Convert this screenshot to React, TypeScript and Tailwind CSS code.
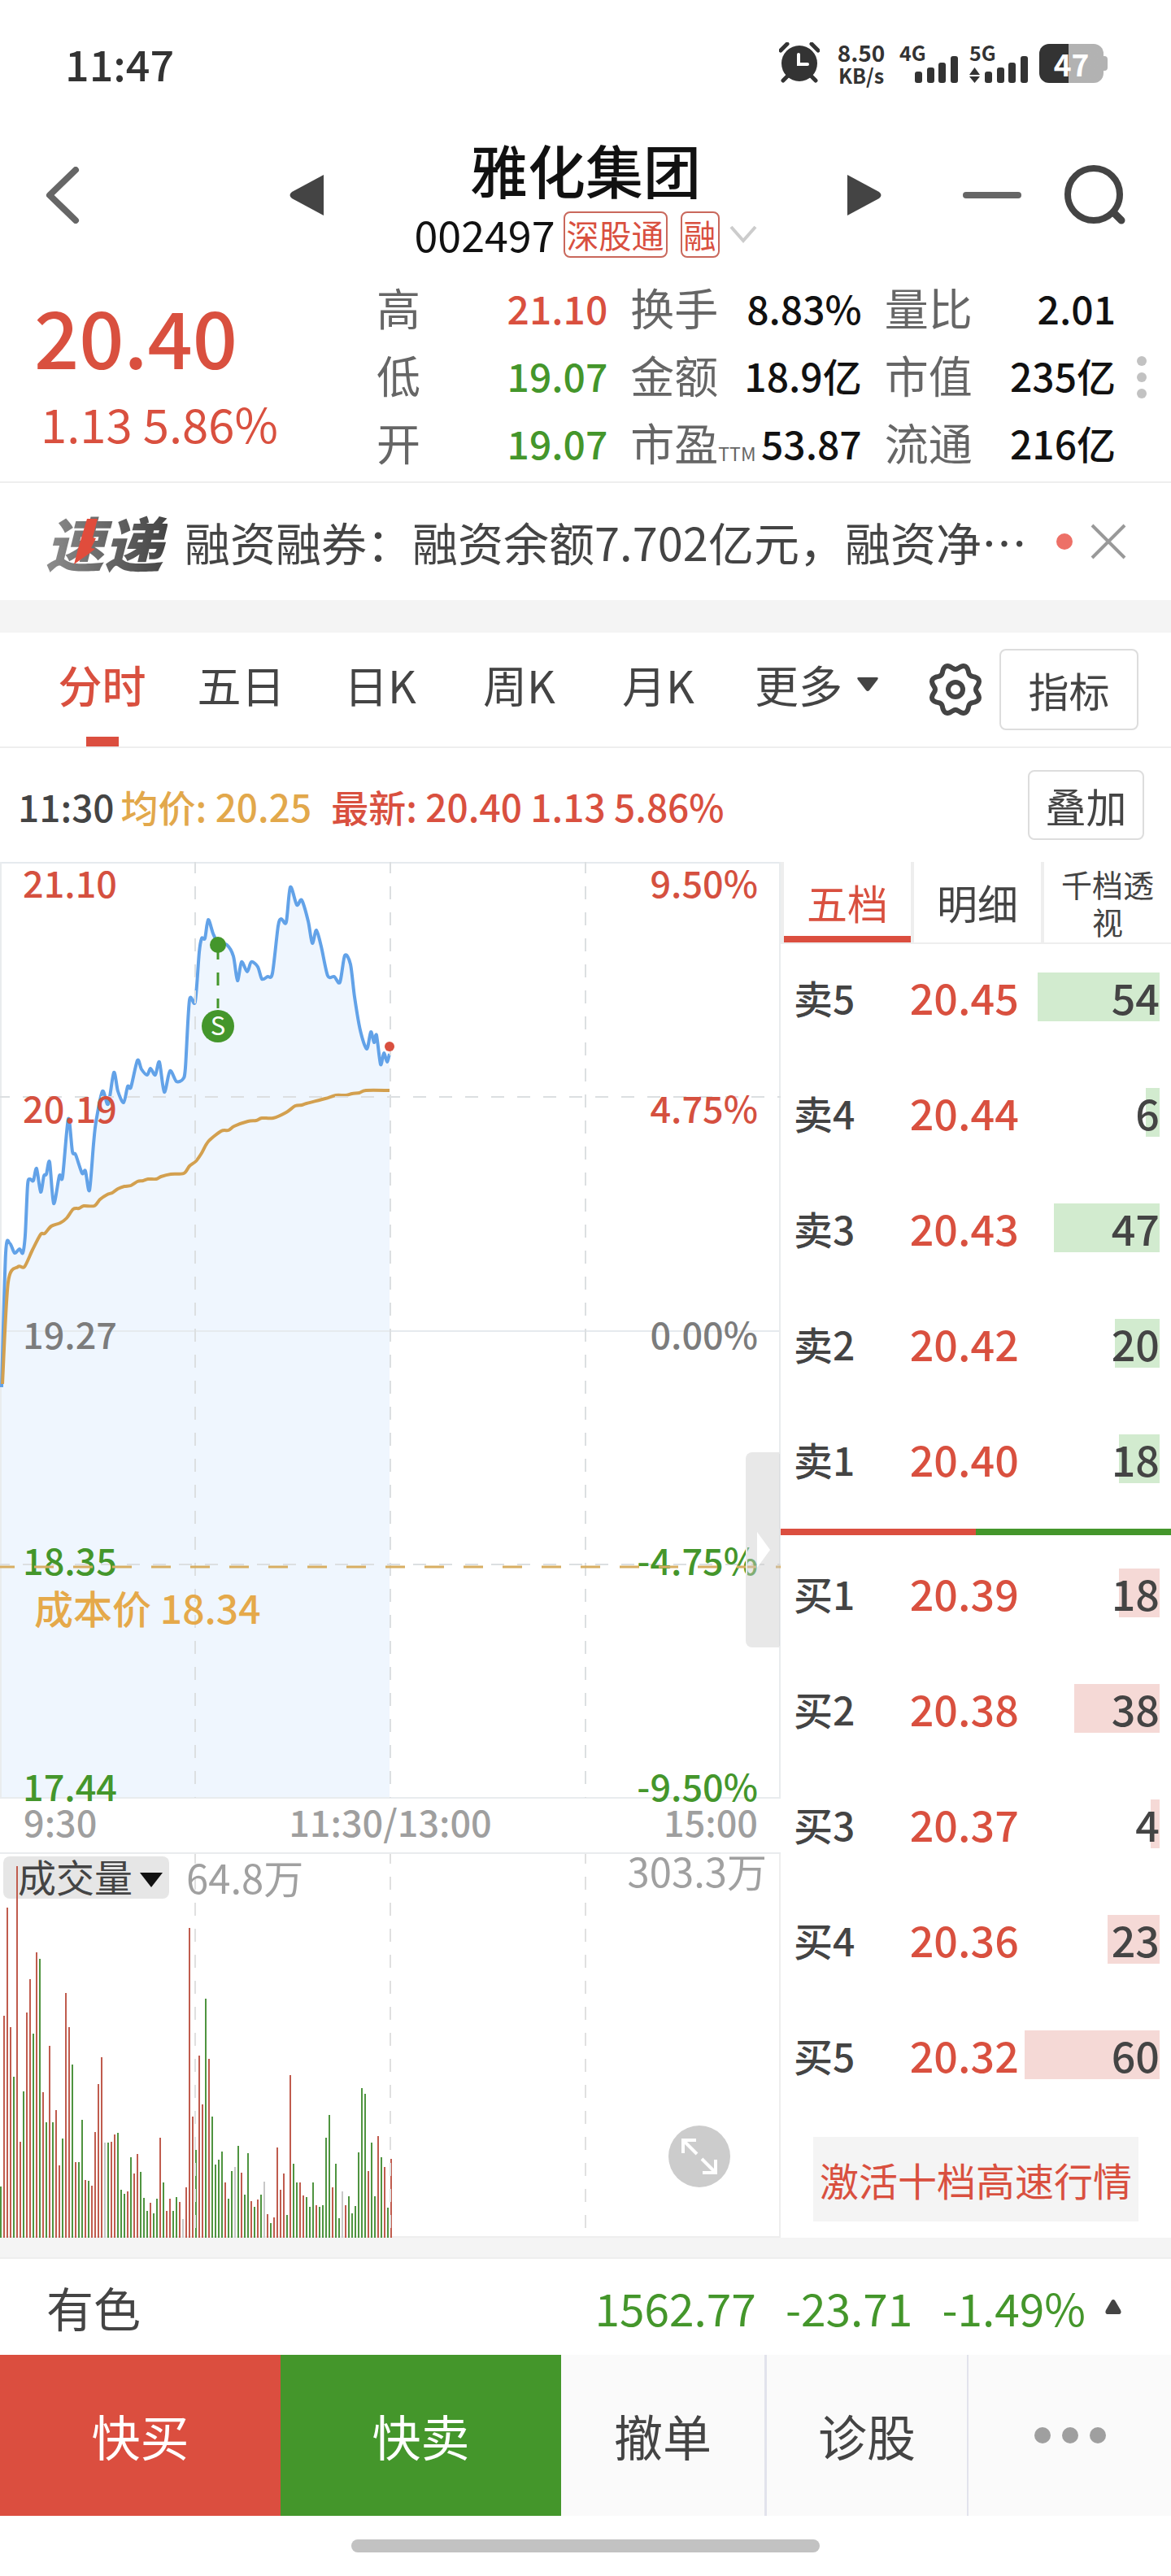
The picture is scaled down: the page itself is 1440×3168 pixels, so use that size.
import { useState } from "react";

type Tone = "r" | "g" | "n";
type Point = [number, number];

const STATS = [
  { label: "高", value: "21.10", color: "text-[#d9503f]" },
  { label: "换手", value: "8.83%", color: "text-[#111111]" },
  { label: "量比", value: "2.01", color: "text-[#111111]" },
  { label: "低", value: "19.07", color: "text-[#44962b]" },
  { label: "金额", value: "18.9亿", color: "text-[#111111]" },
  { label: "市值", value: "235亿", color: "text-[#111111]" },
  { label: "开", value: "19.07", color: "text-[#44962b]" },
  { label: "市盈", sub: "TTM", value: "53.87", color: "text-[#111111]" },
  { label: "流通", value: "216亿", color: "text-[#111111]" },
];

const PERIODS = ["分时", "五日", "日K", "周K", "月K"];

const SELLS = [
  { label: "卖5", price: "20.45", qty: 54 },
  { label: "卖4", price: "20.44", qty: 6 },
  { label: "卖3", price: "20.43", qty: 47 },
  { label: "卖2", price: "20.42", qty: 20 },
  { label: "卖1", price: "20.40", qty: 18 },
];

const BUYS = [
  { label: "买1", price: "20.39", qty: 18 },
  { label: "买2", price: "20.38", qty: 38 },
  { label: "买3", price: "20.37", qty: 4 },
  { label: "买4", price: "20.36", qty: 23 },
  { label: "买5", price: "20.32", qty: 60 },
];

const PRICE: Point[] = [
  [2, 646], [7, 481], [12, 469], [18, 481], [24, 476], [28, 481], [31, 459], [34, 397], [37, 390], [41, 392],
  [45, 377], [50, 406], [54, 386], [57, 384], [61, 369], [66, 420], [73, 386], [77, 387], [84, 316], [89, 356],
  [93, 360], [101, 383], [105, 380], [110, 404], [115, 347], [118, 320], [126, 282], [133, 298], [140, 259],
  [145, 282], [152, 296], [157, 276], [161, 277], [169, 244], [174, 255], [181, 262], [185, 254], [191, 262],
  [196, 246], [202, 283], [209, 257], [217, 270], [225, 267], [228, 253], [233, 170], [240, 172], [245, 111],
  [248, 94], [252, 94], [256, 71], [262, 88], [268, 99], [279, 102], [287, 116], [292, 146], [297, 123],
  [304, 135], [309, 123], [317, 129], [322, 144], [329, 141], [335, 137], [342, 79], [346, 70], [352, 74],
  [357, 31], [365, 53], [371, 47], [379, 73], [384, 100], [389, 84], [395, 104], [403, 140], [411, 141],
  [418, 148], [424, 115], [431, 126], [436, 166], [443, 207], [451, 230], [456, 209], [460, 222], [463, 213],
  [468, 249], [472, 235], [476, 246], [479, 236],
];

const AVERAGE: Point[] = [
  [3, 642], [10, 517], [22, 498], [30, 498], [40, 477], [50, 458], [55, 457], [63, 448], [74, 444], [82, 438],
  [90, 427], [97, 426], [103, 423], [116, 423], [123, 415], [132, 409], [138, 407], [145, 402], [153, 399],
  [161, 398], [169, 393], [176, 392], [182, 390], [192, 390], [198, 387], [210, 384], [226, 383], [233, 374],
  [241, 368], [248, 358], [256, 344], [272, 331], [281, 330], [288, 325], [305, 319], [315, 318], [322, 315],
  [336, 315], [352, 308], [363, 300], [371, 299], [377, 297], [400, 291], [413, 287], [425, 287], [433, 285],
  [442, 284], [450, 281], [479, 281],
];

// one bar per minute, 9:30 to 11:30
const VOLUME = [
  63, 273, 406, 259, 198, 457, 118, 180, 277, 318, 251, 351, 343, 179, 142, 236, 142, 157, 89, 122, 301, 259, 213, 93,
  93, 145, 71, 70, 64, 130, 189, 222, 117, 117, 118, 127, 129, 59, 54, 57, 99, 79, 103, 81, 49, 33, 43, 30, 48, 123,
  68, 33, 48, 33, 50, 44, 23, 62, 381, 149, 108, 224, 164, 294, 220, 149, 90, 96, 106, 68, 48, 82, 87, 113, 80, 53,
  104, 45, 38, 47, 53, 69, 29, 18, 25, 111, 59, 79, 28, 200, 91, 68, 68, 52, 50, 38, 68, 40, 38, 40, 123, 151, 62, 91,
  24, 57, 40, 51, 30, 39, 105, 184, 177, 82, 117, 51, 125, 99, 87, 37, 97,
];
const VOLUME_TONES =
  "grrrgrrgrrgrgrgrgrrgrrgrggrgrrrrngrrgggrgrrgggrggrgrrggrnrrrgrrgrggggrggngrggrgrgnrgrrrrgrggrrgggrggggrggnrggggggrggrgrgr".split(
    "",
  ) as Tone[];

const TONE_FILL: Record<Tone, string> = { r: "#c05c4e", g: "#4f9440", n: "#c8c8c8" };

function smooth(points: Point[]) {
  let d = `M${points[0][0]} ${points[0][1]}`;
  for (let i = 1; i < points.length; i++) {
    const p0 = points[Math.max(0, i - 2)];
    const p1 = points[i - 1];
    const p2 = points[i];
    const p3 = points[Math.min(points.length - 1, i + 1)];
    const c1 = [p1[0] + (p2[0] - p0[0]) / 7, p1[1] + (p2[1] - p0[1]) / 7];
    const c2 = [p2[0] - (p3[0] - p1[0]) / 7, p2[1] - (p3[1] - p1[1]) / 7];
    d += `C${c1[0]} ${c1[1]} ${c2[0]} ${c2[1]} ${p2[0]} ${p2[1]}`;
  }
  return d;
}

// eight-lobed outline of the settings icon
const GEAR = Array.from({ length: 96 }, (_, i) => {
  const a = (i / 96) * Math.PI * 2;
  const r = 28 - 3 * Math.cos(8 * a);
  return `${(34 + r * Math.cos(a)).toFixed(1)},${(34 + r * Math.sin(a)).toFixed(1)}`;
}).join(" ");

function Signal({ label, arrows }: { label: string; arrows?: boolean }) {
  return (
    <div className="flex h-[52px] w-[74px] flex-col">
      <span className="text-[25px] leading-6 font-bold">{label}</span>
      <svg viewBox="0 0 74 34" className="-mt-2 h-[34px] w-[74px]" fill="#333333">
        {arrows && <path d="M0 24 6.500 15 13 24ZM0 26h13L6.500 34Z" />}
        <rect x="19" y="20" width="9" height="14" rx="3" />
        <rect x="34" y="15" width="9" height="19" rx="3" />
        <rect x="48" y="9" width="9" height="25" rx="3" />
        <rect x="63" y="1" width="9" height="33" rx="3" />
      </svg>
    </div>
  );
}

function StatusBar() {
  return (
    <div className="flex h-[160px] items-center justify-between pr-[78px] pb-1 pl-[80px] text-[#333333]">
      <time className="text-[52px] leading-none font-medium">11:47</time>
      <div className="flex items-center">
        <svg viewBox="0 0 50 52" className="h-[52px] w-[50px]">
          <path d="M2 10 10 2M48 10 40 2M5 47l6-6M45 47l-6-6" stroke="#333333" strokeWidth="5" strokeLinecap="round" />
          <circle cx="25" cy="26" r="22" fill="#333333" />
          <path d="M24 15v12h11" fill="none" stroke="#fff" strokeWidth="4" strokeLinecap="round" />
        </svg>
        <div className="ml-4 flex w-[70px] flex-col items-center font-bold">
          <span className="text-[28px] leading-7">8.50</span>
          <span className="text-[25px] leading-7">KB/s</span>
        </div>
        <div className="ml-3">
          <Signal label="4G" />
        </div>
        <div className="ml-3">
          <Signal label="5G" arrows />
        </div>
        <div className="ml-3 flex items-center">
          <div className="flex h-12 w-[79px] items-center justify-center rounded-xl bg-linear-to-r from-[#333333] from-46% to-[#b2b2b2] to-46%">
            <span className="text-[37px] leading-none font-bold text-white">47</span>
          </div>
          <div className="h-[18px] w-[5px] rounded-r bg-[#b2b2b2]" />
        </div>
      </div>
    </div>
  );
}

function Header() {
  return (
    <header className="flex h-[176px] items-center justify-between pr-14 pb-4 pl-14">
      <div className="flex items-center gap-[258px]">
        <button aria-label="返回">
          <svg viewBox="0 0 42 70" className="h-[70px] w-[42px]" fill="none" stroke="#666666" strokeWidth="8" strokeLinecap="round" strokeLinejoin="round">
            <path d="M37 4 5 35l32 31" />
          </svg>
        </button>
        <button aria-label="上一只">
          <svg viewBox="0 0 42 50" className="h-[50px] w-[42px]" fill="#444444">
            <path d="M42 0v50L3 29q-5-4 0-8Z" />
          </svg>
        </button>
      </div>
      <div className="flex flex-col items-center gap-2">
        <h1 className="text-[71px] leading-[88px] font-medium text-[#111111]">雅化集团</h1>
        <div className="flex items-center">
          <span className="text-[52px] leading-[58px] text-[#111111]">002497</span>
          <span className="ml-2.5 h-[57px] rounded-lg border-2 border-[#c9685c] px-0.5 text-[40px] leading-[52px] text-[#d9503f]">深股通</span>
          <span className="ml-4 h-[57px] rounded-lg border-2 border-[#c9685c] px-0.5 text-[40px] leading-[52px] text-[#d9503f]">融</span>
          <button aria-label="展开" className="ml-3">
            <svg viewBox="0 0 34 22" className="h-[22px] w-[34px]" fill="none" stroke="#cccccc" strokeWidth="4">
              <path d="m2 2 15 17L32 2" />
            </svg>
          </button>
        </div>
      </div>
      <div className="flex items-center">
        <button aria-label="下一只">
          <svg viewBox="0 0 42 50" className="h-[50px] w-[42px]" fill="#444444">
            <path d="M0 0v50l39-21q5-4 0-8Z" />
          </svg>
        </button>
        <button aria-label="删除自选" className="ml-[100px] h-2 w-[72px] rounded-full bg-[#666666]" />
        <button aria-label="搜索" className="ml-[52px]">
          <svg viewBox="0 0 76 76" className="h-[76px] w-[76px]" fill="none" stroke="#444444" strokeWidth="8" strokeLinecap="round">
            <circle cx="37" cy="37" r="32" />
            <path d="m62 60 9 9" strokeWidth="9" />
          </svg>
        </button>
      </div>
    </header>
  );
}

function Quote() {
  return (
    <section className="flex h-[258px] items-start border-b-2 border-[#eeeeee]">
      <div className="w-[463px] pl-[42px] text-[#d9503f]">
        <p className="pt-5 text-[97px] leading-[112px] font-medium">20.40</p>
        <p className="mt-5 pl-2 text-[58px] leading-[64px]">1.13 5.86%</p>
      </div>
      <dl className="grid flex-1 grid-cols-3 gap-x-7">
        {STATS.map((s) => (
          <div key={s.label} className="flex h-[83px] items-center justify-between whitespace-nowrap">
            <dt className="text-[54px] leading-[80px] text-[#666666]">
              {s.label}
              {s.sub && <span className="text-[23px] leading-none">{s.sub}</span>}
            </dt>
            <dd className={`text-[48px] leading-[80px] font-medium ${s.color}`}>{s.value}</dd>
          </div>
        ))}
      </dl>
      <button aria-label="更多指标" className="flex w-[68px] flex-col items-center gap-2 self-center pr-1">
        <i className="size-3 rounded-full bg-[#c2c2c2]" />
        <i className="size-3 rounded-full bg-[#c2c2c2]" />
        <i className="size-3 rounded-full bg-[#c2c2c2]" />
      </button>
    </section>
  );
}

function News() {
  return (
    <section className="flex h-36 items-center pr-[55px] pl-14">
      <div className="relative w-[150px] shrink-0">
        <span className="block bg-linear-to-r from-[#8d8d8d] to-[#444444] bg-clip-text text-[72px] leading-[80px] font-black text-transparent italic">速递</span>
        <svg viewBox="0 0 32 56" className="absolute top-3 left-[34px] h-14 w-8" fill="#e04c3c">
          <path d="M17 0h13l-6 23 4 1-6 12 5 1-9 7L1 56l5-19Z" />
        </svg>
      </div>
      <a href="#news" className="ml-[21px] flex-1 truncate text-[56px] leading-[80px] text-[#444444]">
        融资融券：融资余额7.702亿元，融资净⋯
      </a>
      <i className="size-5 shrink-0 rounded-full bg-[#ed7067]" />
      <button aria-label="关闭" className="ml-[22px] shrink-0">
        <svg viewBox="0 0 44 44" className="size-11" stroke="#999999" strokeWidth="4">
          <path d="M2 2l40 40M42 2 2 42" />
        </svg>
      </button>
    </section>
  );
}

function PeriodTabs() {
  const [active, setActive] = useState("分时");
  return (
    <nav className="flex h-[142px] items-center border-b-2 border-[#eeeeee] pr-10 pl-10 text-[54px] text-[#444444]">
      {PERIODS.map((p) => (
        <button
          key={p}
          onClick={() => setActive(p)}
          className={`flex h-full w-[171px] flex-col items-center justify-between pt-6 leading-[80px] ${
            p === active ? "font-medium text-[#d9503f]" : ""
          }`}
        >
          {p}
          {p === active && <i className="h-3 w-10 bg-[#db4e3f]" />}
        </button>
      ))}
      <button className="ml-[33px] flex h-full items-start gap-[18px] pt-6 leading-[80px]">
        更多
        <svg viewBox="0 0 26 18" className="mt-[31px] h-[18px] w-[26px]" fill="#444444">
          <path d="M2 0h22q3 0 1 3L15 16q-2 2-4 0L1 3q-2-3 1-3Z" />
        </svg>
      </button>
      <button aria-label="设置" className="ml-auto">
        <svg viewBox="0 0 68 68" className="size-[68px]" fill="none" stroke="#444444" strokeWidth="6" strokeLinejoin="round">
          <polygon points={GEAR} />
          <circle cx="34" cy="34" r="9" />
        </svg>
      </button>
      <button className="ml-5 h-[100px] w-[171px] rounded-lg border-2 border-[#dddddd] text-[50px]">指标</button>
    </nav>
  );
}

function ChartInfo() {
  return (
    <div className="flex h-[140px] items-center justify-between pr-[33px] pl-[22px]">
      <p className="flex pt-0.5 text-[46px] font-medium text-[#d9503f]">
        <span className="text-[#444444]">11:30</span>
        <span className="ml-2 text-[#e2a84b]">均价: 20.25</span>
        <span className="ml-6">最新: 20.40 1.13 5.86%</span>
      </p>
      <button className="h-[86px] w-[143px] rounded-lg border-2 border-[#dddddd] text-[50px] leading-none text-[#444444]">叠加</button>
    </div>
  );
}

const AXIS = [
  { y: 44, price: "21.10", pct: "9.50%", fill: "#d5503f" },
  { y: 321, price: "20.19", pct: "4.75%", fill: "#d5503f" },
  { y: 599, price: "19.27", pct: "0.00%", fill: "#7c7c7c" },
  { y: 877, price: "18.35", pct: "-4.75%", fill: "#44962b" },
  { y: 1155, price: "17.44", pct: "-9.50%", fill: "#44962b" },
];

function PriceChart() {
  const line = smooth(PRICE);
  return (
    <div className="relative">
      <svg viewBox="0 0 960 1220" className="block w-full" fontSize="45" fontWeight="500">
        <path d={`${line}V1151H0V646Z`} fill="#eff6fe" />
        <path d="M0 1h960M0 577h960" stroke="#e6eaee" strokeWidth="2" />
        <path d="M1 0v1151M0 1151h960M959 0v1151M0 1219h960" stroke="#e9ecee" strokeWidth="2" fill="none" />
        <path d={line} fill="none" stroke="#62a2e8" strokeWidth="4" strokeLinejoin="round" />
        <path d={smooth(AVERAGE)} fill="none" stroke="#d3a04f" strokeWidth="4" />
        <path d="M-4 289H960M-4 864H960M240-2V1151M480-2V1151M720-2V1151" stroke="#dcdfe1" strokeWidth="2" strokeDasharray="16 16" />
        {AXIS.map((a) => (
          <g key={a.price} fill={a.fill}>
            <text x="28" y={a.y}>{a.price}</text>
            <text x="932" y={a.y} textAnchor="end">{a.pct}</text>
          </g>
        ))}
        <path d="M-6 867H960" stroke="#d8ae62" strokeWidth="3" strokeDasharray="24 24" />
        <text x="42" y="937" fontSize="48" fill="#e5a94a">成本价 18.34</text>
        <path d="M268 104v76" stroke="#44962b" strokeWidth="3" strokeDasharray="16 16" />
        <circle cx="268" cy="102" r="10" fill="#44962b" />
        <circle cx="268" cy="202" r="20" fill="#44962b" />
        <text x="268" y="213" fontSize="31" fontWeight="400" textAnchor="middle" fill="#fff">S</text>
        <circle cx="479" cy="227" r="6" fill="#d9503f" />
        <g fill="#9f9f9f">
          <text x="29" y="1199">9:30</text>
          <text x="480" y="1199" textAnchor="middle">11:30/13:00</text>
          <text x="932" y="1199" textAnchor="end">15:00</text>
        </g>
      </svg>
      <button
        aria-label="收起盘口"
        className="absolute top-[726px] right-[1px] flex h-[240px] w-[42px] items-center justify-center rounded-l-lg border-2 border-r-0 border-[#e8e8e8] bg-[#cccccc]/45"
      >
        <svg viewBox="0 0 16 44" className="h-11 w-4" fill="#fff">
          <path d="M0 0 16 22 0 44Z" />
        </svg>
      </button>
    </div>
  );
}

function VolumeChart() {
  return (
    <div className="relative">
      <svg viewBox="0 0 960 472" className="block w-full">
        <rect x="4" y="3" width="204" height="52" rx="8" fill="#e6e6e6" />
        <path d="M959 0v471H0" stroke="#eeeeee" strokeWidth="2" fill="none" />
        {VOLUME.map((v, i) => (
          <rect key={i} x={i * 4} y={472 - v} width="2" height={v} fill={TONE_FILL[VOLUME_TONES[i]]} />
        ))}
        <path d="M240-4V471M480-4V471M720-4V471" stroke="#e0e0e0" strokeWidth="2" strokeDasharray="16 16" />
        <text x="22" y="47" fontSize="47" fill="#444444">成交量</text>
        <path d="M172 23h28l-14 18Z" fill="#111111" />
        <text x="229" y="49" fontSize="49" fill="#a0a0a0">64.8万</text>
        <text x="943" y="41" fontSize="49" fill="#a0a0a0" textAnchor="end">303.3万</text>
      </svg>
      <button aria-label="全屏" className="absolute right-[62px] bottom-[62px] size-[76px] rounded-full bg-[#cccccc]">
        <svg viewBox="0 0 76 76" fill="none" stroke="#fff" strokeWidth="4">
          <path d="M18 34V18h16M19 19l16 16M58 42v16H42M57 57 41 41" />
        </svg>
      </button>
    </div>
  );
}

function BookTable({ rows, bar }: { rows: typeof SELLS; bar: string }) {
  return (
    <table className="w-full table-fixed text-[#444444]">
      <tbody>
        {rows.map((r) => (
          <tr key={r.label} className="h-[142px]">
            <th scope="row" className="w-[28%] pb-3 pl-4 text-left text-[48px] leading-[60px] font-medium">{r.label}</th>
            <td className="w-[33%] pb-3 text-right text-[52px] leading-[60px] font-medium text-[#d9503f]">{r.price}</td>
            <td className="relative pr-3.5 pb-3">
              <div className="flex h-[60px] items-center justify-end">
                <div className={`h-full ${bar}`} style={{ width: `${(r.qty / 60) * 96}%` }} />
                <span className="absolute right-3.5 text-[52px] leading-[60px] font-medium">{r.qty}</span>
              </div>
            </td>
          </tr>
        ))}
      </tbody>
    </table>
  );
}

function OrderBook() {
  return (
    <aside className="w-1/3">
      <div className="grid h-[101px] grid-cols-3 gap-1 border-b-2 border-[#eeeeee] bg-[#eeeeee] pl-1 text-[50px] text-[#444444]">
        <button className="border-b-8 border-[#db4e3f] bg-white pt-2 text-[#d9503f]">五档</button>
        <button className="bg-white">明细</button>
        <button className="bg-white px-5 text-[38px] leading-[46px]">千档透视</button>
      </div>
      <BookTable rows={SELLS} bar="bg-[#d2ebcf]" />
      <div className="mt-[9px] flex h-2">
        <div className="flex-1 bg-[#db4e3f]" />
        <div className="flex-1 bg-[#44962b]" />
      </div>
      <div className="pt-1.5">
        <BookTable rows={BUYS} bar="bg-[#f5d9d6]" />
      </div>
      <div className="px-10 pt-6">
        <button className="h-[104px] w-full bg-[#f4f4f4] text-[48px] whitespace-nowrap text-[#d9503f]">激活十档高速行情</button>
      </div>
    </aside>
  );
}

function IndexRow() {
  return (
    <section className="flex h-[118px] items-center pr-[61px] pl-[57px] text-[55px] text-[#44962b]">
      <span className="mr-auto text-[58px] text-[#444444]">有色</span>
      <span>1562.77</span>
      <span className="ml-9">-23.71</span>
      <span className="ml-9">-1.49%</span>
      <svg viewBox="0 0 20 18" className="ml-6 h-[18px] w-5" fill="#444444">
        <path d="M8 1q2-2 4 0l7 12q2 5-3 5H4q-5 0-3-5Z" />
      </svg>
    </section>
  );
}

function ActionBar() {
  return (
    <footer>
      <div className="grid h-[198px] grid-cols-[345fr_345fr_253fr_248fr_249fr] text-[60px] text-[#444444]">
        <button className="bg-[#db4e3f] text-white">快买</button>
        <button className="bg-[#44962b] text-white">快卖</button>
        <button className="border-r-3 border-[#e2e3ec] bg-[#fafafa]">撤单</button>
        <button className="border-r-2 border-[#e2e3ec] bg-[#fafafa]">诊股</button>
        <button aria-label="更多" className="flex items-center justify-center gap-3.5 bg-[#fafafa]">
          <i className="size-5 rounded-full bg-[#9f9f9f]" />
          <i className="size-5 rounded-full bg-[#9f9f9f]" />
          <i className="size-5 rounded-full bg-[#9f9f9f]" />
        </button>
      </div>
      <div className="flex h-[74px] items-center justify-center">
        <div className="h-4 w-2/5 rounded-full bg-[#c2c2c2]" />
      </div>
    </footer>
  );
}

export default function App() {
  return (
    <main className="min-h-screen bg-white font-['Noto_Sans_CJK_SC',sans-serif]">
      <StatusBar />
      <Header />
      <Quote />
      <News />
      <div className="h-10 bg-[#f4f4f4]" />
      <PeriodTabs />
      <ChartInfo />
      <div className="flex">
        <div className="w-2/3">
          <PriceChart />
          <VolumeChart />
        </div>
        <OrderBook />
      </div>
      <div className="h-[26px] border-b-2 border-[#eeeeee] bg-[#f4f4f4]" />
      <IndexRow />
      <ActionBar />
    </main>
  );
}
